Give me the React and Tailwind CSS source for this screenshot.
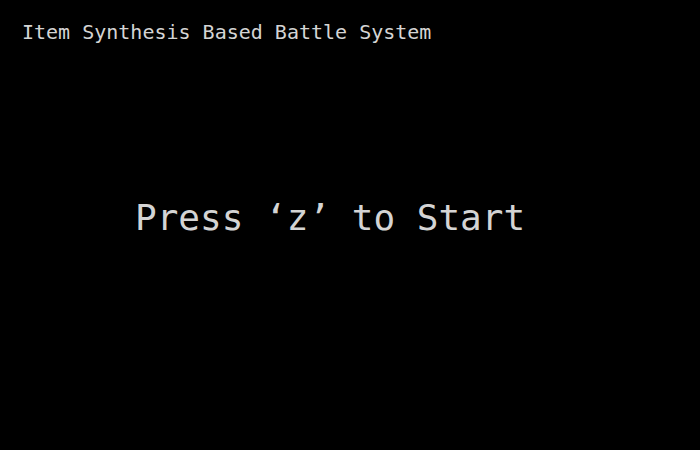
export default function App() {
  return (
    <div
      className="h-[450px] w-[700px] bg-black text-[#d4d4d4] flex flex-col"
      style={{ fontFamily: '"DejaVu Sans Mono", "Liberation Mono", monospace' }}
    >
      <div className="pl-[22px] pt-[18px] text-[20px] leading-[28px]">
        Item Synthesis Based Battle System
      </div>
      <div className="pl-[135px] mt-[150px] text-[36px] leading-[44px]">
        Press ‘z’ to Start
      </div>
    </div>
  );
}
